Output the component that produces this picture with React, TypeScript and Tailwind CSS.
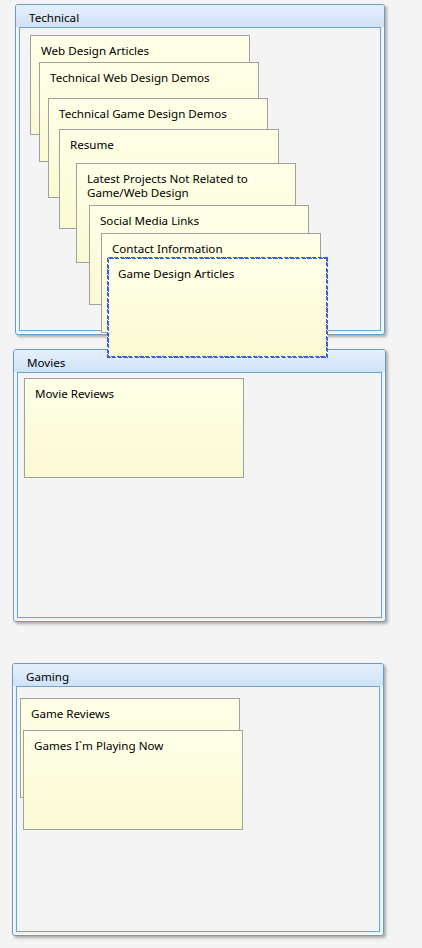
import React from "react";

type Win = { title: string; pos: string };
type Note = { text: React.ReactNode; pos: string; selected?: boolean };

const windows: Win[] = [
  { title: "Technical", pos: "left-[15px] top-[4px] w-[370px] h-[331px] z-10" },
  { title: "Movies", pos: "left-[13px] top-[349px] w-[373px] h-[273px]" },
  { title: "Gaming", pos: "left-[12px] top-[663px] w-[372px] h-[273px]" },
];

const notes: Note[] = [
  { text: "Web Design Articles", pos: "left-[30px] top-[35px]" },
  { text: "Technical Web Design Demos", pos: "left-[39px] top-[62px]" },
  { text: "Technical Game Design Demos", pos: "left-[48px] top-[98px]" },
  { text: "Resume", pos: "left-[59px] top-[129px]" },
  {
    text: (
      <>
        Latest Projects Not Related to
        <br />
        Game/Web Design
      </>
    ),
    pos: "left-[76px] top-[163px]",
  },
  { text: "Social Media Links", pos: "left-[89px] top-[205px]" },
  { text: "Contact Information", pos: "left-[101px] top-[233px]" },
  { text: "Game Design Articles", pos: "left-[107px] top-[257px]", selected: true },
  { text: "Movie Reviews", pos: "left-[24px] top-[378px]" },
  { text: "Game Reviews", pos: "left-[20px] top-[698px]" },
  { text: "Games I`m Playing Now", pos: "left-[23px] top-[730px]" },
];

function Window({ win }: { win: Win }) {
  return (
    <div
      className={
        "absolute flex flex-col rounded-[3px] border border-[#6a9cc4] bg-[#eaf2fb] shadow-[2px_2px_3px_rgba(0,0,0,0.3),inset_0_0_0_1px_#ffffff] " +
        win.pos
      }
    >
      <div className="flex h-[22px] shrink-0 items-center rounded-t-[2px] bg-gradient-to-b from-[#e6f0fc] to-[#cfe2f7] pl-[13px] pt-[4px] text-[11.6px] text-black">
        {win.title}
      </div>
      <div className="mx-[3px] mb-[3px] flex-1 border border-[#68a6cf] bg-[#f4f4f4]" />
    </div>
  );
}

function StickyNote({ note }: { note: Note }) {
  if (note.selected) {
    return (
      <div
        className={
          "absolute z-20 h-[101px] w-[221px] bg-[repeating-linear-gradient(45deg,#3a5ee0_0px,#3a5ee0_3px,#ffffff_3px,#ffffff_4px)] p-[2px] " +
          note.pos
        }
      >
        <div className="h-full w-full bg-gradient-to-b from-[#ffffe8] to-[#fafad3] pl-[9px] pt-[7px] text-[11.6px] leading-[15px] text-black">
          {note.text}
        </div>
      </div>
    );
  }
  return (
    <div
      className={
        "absolute z-20 h-[100px] w-[220px] border border-[#a0a0a0] bg-gradient-to-b from-[#ffffe8] to-[#fafad3] pl-[10px] pt-[8px] text-[11.6px] leading-[14px] text-black " +
        note.pos
      }
    >
      {note.text}
    </div>
  );
}

export default function App() {
  return (
    <div className="relative h-[948px] w-[422px] overflow-hidden bg-[#f4f4f4] font-['Noto_Sans','Open_Sans',sans-serif]">
      {windows.map((w) => (
        <Window key={w.title} win={w} />
      ))}
      {notes.map((n, i) => (
        <StickyNote key={i} note={n} />
      ))}
    </div>
  );
}
